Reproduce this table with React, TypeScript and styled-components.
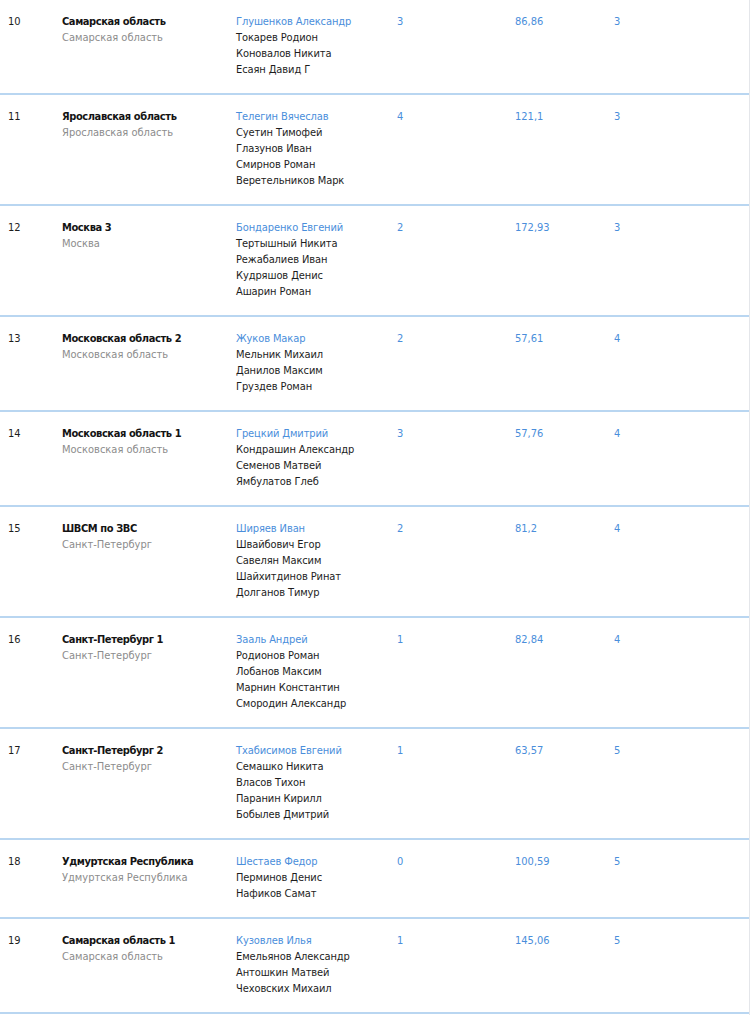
import React from 'react'
import styled, { createGlobalStyle } from 'styled-components'

const GlobalStyle = createGlobalStyle`
    html, body {
        margin: 0px;
        padding: 0px;
        background: #ffffff;
    }
    body {
        font-family: 'Liberation Sans Narrow', 'DejaVu Sans Condensed', 'Liberation Sans', sans-serif;
        font-size: 11px;
        color: #1d1d1d;
        overflow: hidden;
    }
`

const Table = styled.div`
    display: flex;
    flex-direction: column;
    width: 749px;
    border-right: 1px solid #e4e6ea;
    min-height: 1020px;
`

const Row = styled.div`
    display: grid;
    grid-template-columns: 54px 174px 161px 118px 99px 1fr;
    padding: 14px 0px 15px 8px;
    border-bottom: 2px solid #b9d6f1;
    line-height: 16px;
`

const Place = styled.div`
    color: #1d1d1d;
`

const TeamCell = styled.div`
    display: flex;
    flex-direction: column;
`

const TeamName = styled.span`
    font-weight: bold;
    color: #141414;
    letter-spacing: -0.4px;
`

const Region = styled.span`
    color: #8c8c8c;
`

const Members = styled.div`
    display: flex;
    flex-direction: column;
`

const Member = styled.span<{ $captain?: boolean }>`
    color: ${p => (p.$captain ? '#4a8edb' : '#1d1d1d')};
    letter-spacing: -0.1px;
`

const Value = styled.div`
    color: #4a8edb;
`

type Team = {
    place: number
    name: string
    region: string
    members: string[]
    a: string
    b: string
    c: string
}

const teams: Team[] = [
    { place: 10, name: 'Самарская область', region: 'Самарская область', members: ['Глушенков Александр', 'Токарев Родион', 'Коновалов Никита', 'Есаян Давид Г'], a: '3', b: '86,86', c: '3' },
    { place: 11, name: 'Ярославская область', region: 'Ярославская область', members: ['Телегин Вячеслав', 'Суетин Тимофей', 'Глазунов Иван', 'Смирнов Роман', 'Веретельников Марк'], a: '4', b: '121,1', c: '3' },
    { place: 12, name: 'Москва 3', region: 'Москва', members: ['Бондаренко Евгений', 'Тертышный Никита', 'Режабалиев Иван', 'Кудряшов Денис', 'Ашарин Роман'], a: '2', b: '172,93', c: '3' },
    { place: 13, name: 'Московская область 2', region: 'Московская область', members: ['Жуков Макар', 'Мельник Михаил', 'Данилов Максим', 'Груздев Роман'], a: '2', b: '57,61', c: '4' },
    { place: 14, name: 'Московская область 1', region: 'Московская область', members: ['Грецкий Дмитрий', 'Кондрашин Александр', 'Семенов Матвей', 'Ямбулатов Глеб'], a: '3', b: '57,76', c: '4' },
    { place: 15, name: 'ШВСМ по ЗВС', region: 'Санкт-Петербург', members: ['Ширяев Иван', 'Швайбович Егор', 'Савелян Максим', 'Шайхитдинов Ринат', 'Долганов Тимур'], a: '2', b: '81,2', c: '4' },
    { place: 16, name: 'Санкт-Петербург 1', region: 'Санкт-Петербург', members: ['Зааль Андрей', 'Родионов Роман', 'Лобанов Максим', 'Марнин Константин', 'Смородин Александр'], a: '1', b: '82,84', c: '4' },
    { place: 17, name: 'Санкт-Петербург 2', region: 'Санкт-Петербург', members: ['Тхабисимов Евгений', 'Семашко Никита', 'Власов Тихон', 'Паранин Кирилл', 'Бобылев Дмитрий'], a: '1', b: '63,57', c: '5' },
    { place: 18, name: 'Удмуртская Республика', region: 'Удмуртская Республика', members: ['Шестаев Федор', 'Перминов Денис', 'Нафиков Самат'], a: '0', b: '100,59', c: '5' },
    { place: 19, name: 'Самарская область 1', region: 'Самарская область', members: ['Кузовлев Илья', 'Емельянов Александр', 'Антошкин Матвей', 'Чеховских Михаил'], a: '1', b: '145,06', c: '5' },
]

export default function App() {
    return (
        <>
            <GlobalStyle />
            <Table>
                {teams.map(t => (
                    <Row key={t.place}>
                        <Place>{t.place}</Place>
                        <TeamCell>
                            <TeamName>{t.name}</TeamName>
                            <Region>{t.region}</Region>
                        </TeamCell>
                        <Members>
                            {t.members.map((m, i) => (
                                <Member key={m} $captain={i === 0}>{m}</Member>
                            ))}
                        </Members>
                        <Value>{t.a}</Value>
                        <Value>{t.b}</Value>
                        <Value>{t.c}</Value>
                    </Row>
                ))}
            </Table>
        </>
    )
}
